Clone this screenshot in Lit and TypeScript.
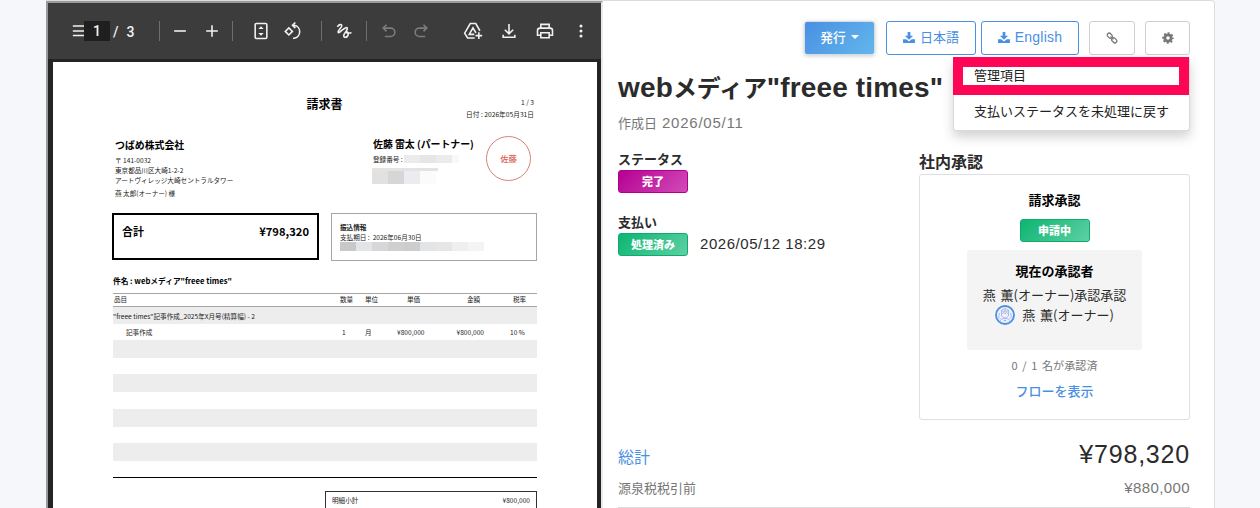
// Invoice detail page - PDF preview on the left, approval summary on the right
import { LitElement, html, css, svg } from 'lit'
import { customElement, property, state } from 'lit/decorators.js'
import { classMap } from 'lit/directives/class-map.js'

interface InvoiceRow {
  height: number
  shaded: boolean
  group?: string
  cells?: string[]
}

const ROWS: InvoiceRow[] = [
  { height: 17, shaded: true, group: '"freee times"記事作成_2025年X月号(精算幅) - 2' },
  { height: 16, shaded: false, cells: ['記事作成', '1', '月', '¥800,000', '¥800,000', '10 %'] },
  { height: 18, shaded: true },
  { height: 16, shaded: false },
  { height: 18, shaded: true },
  { height: 17, shaded: false },
  { height: 18, shaded: true },
  { height: 16, shaded: false },
  { height: 18, shaded: true },
  { height: 16, shaded: false }
]

const ICONS: Record<string, unknown> = {
  menu: svg`<path d="M1 6h14.4M1 12h14.4M1 17.4h14.4" />`,
  minus: svg`<path d="M5 12h14" />`,
  plus: svg`<path d="M5 12h14M12 5v14" />`,
  fit: svg`<rect x="5" y="3" width="14" height="18" rx="1.4" />
    <path class="solid" d="M12 6.2l3.2 3.4H8.8zM12 17.8l3.2-3.4H8.8z" />`,
  rotate: svg`<path d="M7 8.2l4.3 4.3L7 16.8l-4.3-4.3z" />
    <path d="M11.5 5.2h2a7.8 7.8 0 0 1 0 15.4h-1.5M14.8 1.8l-3.4 3.4 3.4 3.4" />`,
  draw: svg`<path d="M4 7c2-3 5.2-3.6 5.3-1.4C9.4 8 4.3 11 5 13.5c.9 2.4 5.5-4.5 9.2-5.5 3.2-.6 1.6 3-.7 5.7-2.4 2.9-2.6 6 .2 5.9 3.6-.3 4.7-6.6 1.7-6.8-2 .3-1.5 2.2 5.6 1.4" />`,
  undo: svg`<path d="M9 4.5L5 8.5l4 4M5.5 8.5H14a5 5 0 0 1 0 10H7" />`,
  redo: svg`<path d="M15 4.5l4 4-4 4M18.5 8.5H10a5 5 0 0 0 0 10h7" />`,
  drive: svg`<path d="M14 20.3H5.500L2 14.6 8.7 3h6.6l5 8.7M13.5 16H7.5L12 8.3l3.5 6M19 13.5v8M15 17.5h8" />`,
  download: svg`<path d="M12 3.5v11.5M7 10.5l5 5 5-5M5 16.5V19.5h14V16.5" />`,
  print: svg`<path d="M7 8V4h10v4M7 17H3v-5.5Q3 8.5 6 8.5h12q3 0 3 3V17h-4M7 14h10v6H7z" />`,
  more: svg`<g class="solid"><circle cx="12" cy="6" r="1.8" /><circle cx="12" cy="12" r="1.8" /><circle cx="12" cy="18" r="1.8" /></g>`
}

@customElement('tool-icon')
export class ToolIcon extends LitElement {
  @property() name = ''

  static styles = css`
    :host {
      display: block;
      width: 20px;
      height: 20px;
    }

    svg {
      display: block;
      width: 20px;
      height: 20px;
      fill: none;
      stroke: currentColor;
      stroke-width: 1.9;
    }

    .solid {
      fill: currentColor;
      stroke: none;
    }
  `

  render() {
    return html`<svg viewBox="0 0 24 24">${ICONS[this.name]}</svg>`
  }
}

@customElement('pixel-strip')
export class PixelStrip extends LitElement {
  @property({ type: Array }) colors: string[] = []
  @property({ type: Number }) size = 9
  @property({ type: Number }) last = 16

  static styles = css`
    :host {
      display: flex;
    }
  `

  render() {
    return this.colors.map((color, index) => {
      const width = index === this.colors.length - 1 ? this.last : 16
      return html`<i style="width: ${width}px; height: ${this.size}px; background: ${color}"></i>`
    })
  }
}

@customElement('pdf-viewer')
export class PdfViewer extends LitElement {
  static styles = css`
    :host {
      display: flex;
      flex-direction: column;
      box-sizing: border-box;
      width: 557px;
      height: 508px;
      overflow: hidden;
      border: solid #989b9a;
      border-width: 2px 0 0 2px;
      border-right: 2px solid #ebe9e9;
      background: #242424;
      font-family: 'Noto Sans CJK JP', sans-serif;
    }

    .toolbar {
      display: grid;
      grid-template-columns: 12px 29px 46px 11px 32px 30px 19px 32px 38px 13px 32px 13px 32px 52px 36px 36px 36px 20px;
      align-items: center;
      flex: none;
      height: 56px;
      padding-left: 24px;
      background: #3c3c3c;
      color: #f1f1f1;
      font: 500 14px Roboto, sans-serif;
    }

    .clip {
      overflow: hidden;
    }

    .page-input {
      width: 26px;
      height: 20px;
      line-height: 21px;
      background: #1f1f1f;
      text-align: center;
    }

    .page-total {
      padding-top: 1px;
      white-space: pre;
      word-spacing: 4.5px;
    }

    .divider {
      width: 1px;
      height: 20px;
      background: #6e6e6e;
    }

    .disabled {
      color: #7c7c7c;
    }

    .paper {
      flex: 1;
      box-sizing: border-box;
      min-height: 0;
      margin: 3px 4px 0 5px;
      padding: 34px 60px 0 59px;
      background: #fff;
      color: #222;
      font-size: 6.6px;
      line-height: 10px;
      white-space: nowrap;
    }

    .head {
      display: grid;
      grid-template-columns: 1fr auto 1fr;
      height: 24px;
    }

    h1 {
      margin: 0;
      color: #000;
      font-size: 12px;
      line-height: 16px;
    }

    .meta {
      padding-right: 3px;
      font-size: 6.7px;
      line-height: 12px;
      text-align: right;
    }

    .parties {
      display: grid;
      grid-template-columns: 258px 113px 45px;
      height: 93px;
      padding-left: 3px;
    }

    .client {
      padding-top: 17px;
    }

    .client h2,
    .sender h2 {
      margin: 0 0 1px;
      color: #000;
      font-size: 9.9px;
      line-height: 17px;
    }

    .contact {
      margin-top: 3px;
    }

    .sender {
      padding-top: 16px;
    }

    .sender h2 {
      margin: 0;
    }

    .registration {
      display: flex;
      gap: 1px;
      height: 12px;
      align-items: center;
    }

    .address {
      margin: 3px 0 0 -1px;
    }

    .thin {
      width: 66px;
      height: 3px;
      background: #e3e3e3;
    }

    .stamp {
      box-sizing: border-box;
      width: 45px;
      height: 45px;
      margin-top: 16px;
      border: 1px solid #d5837b;
      border-radius: 50%;
      color: #dc5b50;
      font-size: 8.3px;
      font-weight: 500;
      line-height: 43px;
      text-align: center;
    }

    .boxes {
      display: flex;
      gap: 12px;
    }

    .sum {
      display: flex;
      justify-content: space-between;
      box-sizing: border-box;
      width: 207px;
      height: 47px;
      padding: 8px 8px 0;
      border: 2px solid #000;
      color: #000;
      font-size: 11px;
      font-weight: 700;
      line-height: 17px;
    }

    .sum .amount {
      font-size: 11.2px;
    }

    .transfer {
      box-sizing: border-box;
      width: 206px;
      height: 48px;
      padding: 8px 8px 0;
      border: 1px solid #a5a5a5;
    }

    .transfer b {
      display: block;
    }

    .subject {
      padding: 15px 0 7px 1px;
      color: #000;
      font-size: 7.7px;
      font-weight: 700;
    }

    .table {
      margin-left: 1px;
      border-bottom: 1px solid #000;
    }

    .columns,
    .row {
      display: grid;
      align-items: center;
      box-sizing: border-box;
    }

    .columns {
      grid-template-columns: 227px 25px 42px 60px 46px 1fr;
      height: 14px;
      padding-bottom: 2px;
      border: solid #a5a5a5;
      border-width: 1px 0;
    }

    .columns span:first-child {
      padding-left: 1px;
    }

    .row {
      grid-template-columns: 229px 23px 32px 59.5px 53.5px 1fr;
    }

    .row span:first-child {
      padding-left: 13px;
    }

    .row.shaded {
      display: flex;
      background: #ededed;
    }

    .subtotal {
      display: flex;
      justify-content: space-between;
      box-sizing: border-box;
      width: 212px;
      height: 40px;
      margin: 13px 0 0 auto;
      padding: 3px 6px 0;
      border: 1px solid #333;
    }
  `

  render() {
    return html`
      <div class="toolbar">
        <div class="clip"><tool-icon name="menu"></tool-icon></div>
        <div class="page-input">1</div>
        <div class="page-total">/ 3</div>
        <div class="divider"></div>
        <tool-icon name="minus"></tool-icon>
        <tool-icon name="plus"></tool-icon>
        <div class="divider"></div>
        <tool-icon name="fit"></tool-icon>
        <tool-icon name="rotate"></tool-icon>
        <div class="divider"></div>
        <tool-icon name="draw"></tool-icon>
        <div class="divider"></div>
        <tool-icon class="disabled" name="undo"></tool-icon>
        <tool-icon class="disabled" name="redo"></tool-icon>
        <tool-icon name="drive"></tool-icon>
        <tool-icon name="download"></tool-icon>
        <tool-icon name="print"></tool-icon>
        <tool-icon name="more"></tool-icon>
      </div>
      <div class="paper">
        <div class="head">
          <span></span>
          <h1>請求書</h1>
          <div class="meta">
            <div>1 / 3</div>
            <div>日付 : 2026年05月31日</div>
          </div>
        </div>
        <div class="parties">
          <div class="client">
            <h2>つばめ株式会社</h2>
            <div>〒 141-0032</div>
            <div>東京都品川区大崎1-2-2</div>
            <div>アートヴィレッジ大崎セントラルタワー</div>
            <div class="contact">燕 太郎(オーナー) 様</div>
          </div>
          <div class="sender">
            <h2>佐藤 雷太 (パートナー)</h2>
            <div class="registration">
              登録番号 :
              <pixel-strip
                .colors=${['#ebebeb', '#e6e6e6', '#ebebeb', '#f8faf9']}
                .size=${8}
                .last=${7}
              ></pixel-strip>
            </div>
            <div class="address">
              <div class="thin"></div>
              <pixel-strip
                .colors=${['#e2e1df', '#d6d6d6', '#ebecef', '#fbfbfb']}
                .size=${13}
              ></pixel-strip>
            </div>
          </div>
          <div class="stamp">佐藤</div>
        </div>
        <div class="boxes">
          <div class="sum"><span>合計</span><span class="amount">¥798,320</span></div>
          <div class="transfer">
            <b>振込情報</b>
            <div>支払期日 :&nbsp; 2026年06月30日</div>
            <pixel-strip
              .colors=${['#c9c8c9', '#e2e4e7', '#d8d6d8', '#cfcfcf', '#cdcdcd', '#e2e4e7', '#e6e6e7', '#efefef', '#f4f4f4']}
            ></pixel-strip>
          </div>
        </div>
        <div class="subject">件名 : webメディア"freee times"</div>
        <div class="table">
          <div class="columns">
            ${['品目', '数量', '単位', '単価', '金額', '税率'].map((name) => html`<span>${name}</span>`)}
          </div>
          ${ROWS.map((row) => this.renderRow(row))}
        </div>
        <div class="subtotal"><span>明細小計</span><span>¥800,000</span></div>
      </div>
    `
  }

  private renderRow(row: InvoiceRow) {
    return html`
      <div class=${classMap({ row: true, shaded: row.shaded })} style="height: ${row.height}px">
        ${row.group ?? row.cells?.map((cell) => html`<span>${cell}</span>`)}
      </div>
    `
  }
}

@customElement('invoice-summary')
export class InvoiceSummary extends LitElement {
  @state() private menuOpen = true

  static styles = css`
    :host {
      display: block;
      flex: 1;
      box-sizing: border-box;
      padding: 20px 24px 0 15px;
      color: #2b2b2b;
      font-family: 'Noto Sans CJK JP', sans-serif;
      font-size: 13px;
      line-height: 20px;
      white-space: nowrap;
    }

    .actions {
      display: flex;
      position: relative;
      justify-content: flex-end;
      height: 34px;
    }

    button {
      display: flex;
      align-items: center;
      justify-content: center;
      box-sizing: border-box;
      height: 34px;
      margin: 0;
      padding: 0 0 2px;
      border: 1px solid #cfcfcf;
      border-radius: 3px;
      background: #fff;
      color: #777;
      font: inherit;
    }

    .issue {
      gap: 5px;
      width: 71px;
      margin-right: 11px;
      border: 1px solid #d5dde6;
      background: linear-gradient(135deg, #4a90e2, #62b6ec);
      box-shadow: 0 1px 4px rgba(0, 0, 0, 0.2);
      color: #fff;
      font-size: 12.7px;
      font-weight: 500;
    }

    .caret {
      border: 4px solid transparent;
      border-top-color: #fff;
      border-bottom: 0;
    }

    .download {
      gap: 5px;
      width: 90px;
      border-color: #4a90e2;
      color: #4a90e2;
    }

    .download svg {
      width: 12px;
      height: 11px;
      fill: currentColor;
    }

    .english {
      width: 98px;
      margin: 0 10px 0 5px;
      font-family: 'Liberation Sans', sans-serif;
      font-size: 14px;
      letter-spacing: 0.25px;
    }

    .link {
      width: 46px;
      margin-right: 10px;
      padding: 0;
    }

    .gear {
      width: 45px;
      padding: 0;
    }

    .menu {
      position: absolute;
      z-index: 1;
      top: 36px;
      right: 0;
      box-sizing: border-box;
      width: 237px;
      height: 74px;
      border: 1px solid #dadada;
      border-top: 0;
      border-radius: 3px;
      background: #fff;
      box-shadow: 0 6px 12px rgba(0, 0, 0, 0.18);
      color: #222;
      line-height: 31px;
    }

    .menu .item {
      padding-left: 20px;
    }

    .menu .marked {
      box-sizing: border-box;
      width: 236px;
      height: 38px;
      margin-left: -1px;
      padding-left: 11px;
      border: 10px solid #ff0556;
      line-height: 16px;
    }

    h1 {
      display: flex;
      align-items: center;
      margin: 12px 0 0;
      height: 42px;
      font-family: 'Liberation Sans', sans-serif;
      font-size: 28px;
      letter-spacing: 0.15px;
    }

    .kana {
      padding-bottom: 3px;
      font-family: 'Noto Sans CJK JP', sans-serif;
      font-size: 24px;
      letter-spacing: -0.1px;
    }

    .created {
      display: flex;
      align-items: center;
      gap: 5px;
      height: 20px;
      margin-top: 4px;
      color: #777;
    }

    .created .digits {
      letter-spacing: 0.75px;
    }

    .digits {
      font-family: 'Liberation Sans', sans-serif;
      font-size: 15px;
      letter-spacing: 0.55px;
    }

    .line .digits {
      padding-bottom: 1px;
    }

    .columns {
      display: flex;
      justify-content: space-between;
      height: 307px;
      padding-top: 16px;
      box-sizing: border-box;
    }

    .label {
      font-weight: 700;
    }

    .line {
      display: flex;
      align-items: center;
      gap: 12px;
      height: 23px;
      margin: 1px 0 19px;
    }

    .badge {
      box-sizing: border-box;
      width: 70px;
      height: 23px;
      border: 1px solid #10ab6c;
      border-radius: 3px;
      background: linear-gradient(135deg, #0cb572, #5ed0a4);
      color: #fff;
      font-size: 11px;
      font-weight: 900;
      line-height: 21px;
      text-align: center;
    }

    .badge.done {
      border-color: #b0008e;
      background: linear-gradient(135deg, #b50092, #d24bb8);
    }

    .approval {
      width: 271px;
      padding-top: 1px;
    }

    h2 {
      margin: 0;
      font-size: 16px;
      line-height: 22px;
    }

    .flow {
      display: flex;
      flex-direction: column;
      align-items: center;
      box-sizing: border-box;
      height: 246px;
      margin-top: 2px;
      padding-top: 15px;
      border: 1px solid #dcdfe4;
      border-radius: 3px;
    }

    .flow .label {
      color: #000;
    }

    .flow .badge {
      margin: 9px 0 8px;
    }

    .approver {
      display: flex;
      flex-direction: column;
      align-items: center;
      box-sizing: border-box;
      width: 175px;
      height: 100px;
      padding-top: 11px;
      border-radius: 3px;
      background: #f4f4f4;
    }

    .approver .label {
      margin-bottom: 4px;
    }

    .person {
      display: flex;
      align-items: center;
      gap: 7px;
    }

    .name {
      font-size: 13px;
      word-spacing: 2px;
    }

    .avatar {
      width: 20px;
      height: 20px;
    }

    .progress {
      margin-top: 5px;
      color: #777;
      font-size: 11px;
      letter-spacing: 0.1px;
      word-spacing: 2px;
    }

    .show-flow {
      margin-top: 6px;
      color: #4a90e2;
      font-weight: 500;
    }

    .total,
    .before-tax {
      display: flex;
      align-items: center;
      justify-content: space-between;
      box-sizing: border-box;
    }

    .total {
      height: 32px;
      color: #4a90e2;
      font-size: 16px;
    }

    .total .price {
      margin-top: -4px;
      color: #2b2b2b;
      font-family: 'Liberation Sans', sans-serif;
      font-size: 25px;
      letter-spacing: 0.8px;
    }

    .before-tax {
      height: 36px;
      padding-bottom: 3px;
      border-bottom: 1px solid #ddd;
      color: #777;
    }

    .before-tax .digits {
      letter-spacing: 0.4px;
    }
  `

  render() {
    return html`
      <div class="actions">
        <button class="issue">発行<i class="caret"></i></button>
        <button class="download">${this.downloadIcon()}日本語</button>
        <button class="download english">${this.downloadIcon()}English</button>
        <button class="link">
          <svg width="12" height="12" viewBox="0 0 13 13" fill="none" stroke="currentColor" stroke-width="1.4">
            <rect x="1" y="1.8" width="6" height="4.2" rx="2.1" transform="rotate(45 4 4)" />
            <rect x="6" y="7" width="6" height="4.2" rx="2.1" transform="rotate(45 9 9)" />
            <path d="M5 5l3 3" />
          </svg>
        </button>
        <button class="gear" @click=${this.toggleMenu}>
          <svg width="12" height="12" viewBox="-6 -6 12 12" fill="none" stroke="currentColor">
            <circle r="3.2" stroke-width="2.8" />
            <circle r="4.9" stroke-width="1.9" stroke-dasharray="1.92 1.93" stroke-dashoffset="0.96" />
          </svg>
        </button>
        ${this.menuOpen
          ? html`
              <div class="menu">
                <div class="item marked">管理項目</div>
                <div class="item">支払いステータスを未処理に戻す</div>
              </div>
            `
          : ''}
      </div>
      <h1>web<span class="kana">メディア</span>"freee times"</h1>
      <div class="created">作成日 <span class="digits">2026/05/11</span></div>
      <div class="columns">
        <div>
          <div class="label">ステータス</div>
          <div class="line"><span class="badge done">完了</span></div>
          <div class="label">支払い</div>
          <div class="line">
            <span class="badge">処理済み</span>
            <span class="digits">2026/05/12 18:29</span>
          </div>
        </div>
        <div class="approval">
          <h2>社内承認</h2>
          <div class="flow">
            <div class="label">請求承認</div>
            <span class="badge">申請中</span>
            <div class="approver">
              <div class="label">現在の承認者</div>
              <div class="name">燕 薫(オーナー)承認承認</div>
              <div class="person">${this.avatar()}<span class="name">燕 薫(オーナー)</span></div>
            </div>
            <div class="progress">0 / 1 名が承認済</div>
            <div class="show-flow">フローを表示</div>
          </div>
        </div>
      </div>
      <div class="total">総計<span class="price">¥798,320</span></div>
      <div class="before-tax">源泉税税引前<span class="digits">¥880,000</span></div>
    `
  }

  private toggleMenu(): void {
    this.menuOpen = !this.menuOpen
  }

  private downloadIcon() {
    return html`
      <svg viewBox="0 0 13 12">
        <path d="M5 0h3v4h3L6.5 8.5 2 4h3z" />
        <path d="M0 8h3.5l3 2.3 3-2.3H13v4H0z" />
      </svg>
    `
  }

  private avatar() {
    return html`
      <svg class="avatar" viewBox="0 0 20 20" fill="none">
        <circle cx="10" cy="10" r="9" fill="#eef1fd" stroke="#4a90e2" stroke-width="1.8" />
        <path
          d="M6 5.5l4-2 4 2-4 1.5zM6.5 6v5q3.5 4 7 0V6M6.5 9l2-1.5L10 9l1.5-1.5 2 1.5M5 17q0-3.5 5-3.5t5 3.5M4.5 8l-1 4 2 2M15.5 8l1 4-2 2"
          stroke="#8fa5ee"
          stroke-width="0.7"
        />
        <circle cx="10" cy="5.2" r="0.9" fill="#e9b36c" />
        <path d="M9 15l1 1.5 1-1.5z" fill="#4a90e2" />
      </svg>
    `
  }
}

@customElement('app-root')
export class AppRoot extends LitElement {
  static styles = css`
    :host {
      display: block;
      box-sizing: border-box;
      height: 508px;
      padding: 0 45px 0 46px;
      overflow: hidden;
      background: #f5f7fb;
    }

    .card {
      display: flex;
      box-sizing: border-box;
      height: 520px;
      border-top: 1px solid #dcdcde;
      border-right: 1px solid #dcdcde;
      border-radius: 0 4px 0 0;
      background: #fff;
    }
  `

  render() {
    return html`
      <div class="card">
        <pdf-viewer></pdf-viewer>
        <invoice-summary></invoice-summary>
      </div>
    `
  }
}
